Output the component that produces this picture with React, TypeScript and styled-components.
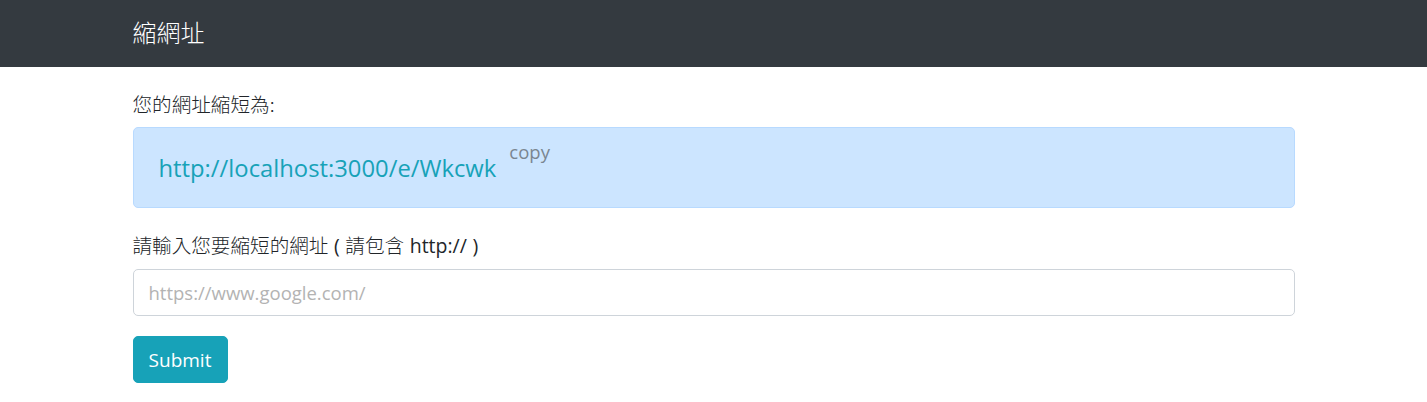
import React from "react";
import styled, { createGlobalStyle } from "styled-components";

const Global = createGlobalStyle`
  html, body { margin: 0; padding: 0; background: #fff; }
  body {
    font-family: "Open Sans", "Noto Sans CJK TC", sans-serif;
    color: #212529;
    font-size: 20px;
  }
  * { box-sizing: border-box; }
`;

const Navbar = styled.nav`
  height: 67px;
  background: #343a40;
  display: flex;
  align-items: center;
`;

const Container = styled.div`
  width: 1162px;
  margin: 0 auto;
`;

const Brand = styled.a`
  color: #fff;
  font-size: 24px;
  font-family: "Noto Sans CJK TC", sans-serif;
  font-weight: 300;
  text-decoration: none;
  line-height: 30px;
  display: inline-block;
  margin-top: -2px;
`;

const Main = styled(Container)`
  padding-top: 22px;
`;

const Label = styled.label<{ $mb: number }>`
  display: block;
  height: 30px;
  font-family: "Noto Sans CJK TC", sans-serif;
  font-size: 19.6px;
  line-height: 30px;
  font-weight: 300;
  margin-bottom: ${(p) => p.$mb}px;
`;

const Latin = styled.span`
  font-family: "Open Sans", sans-serif;
  font-weight: 400;
  font-size: 19.5px;
  word-spacing: 0.5px;
`;

const Alert = styled.div`
  height: 81px;
  background: #cce5ff;
  border: 1px solid #b8daff;
  border-radius: 5px;
  padding: 0 25px;
  display: flex;
  align-items: flex-start;
  padding-top: 20px;
  margin-bottom: 22px;
`;

const LinkText = styled.a`
  color: #17a2b8;
  font-size: 23.8px;
  line-height: 40px;
  text-decoration: none;
`;

const Copy = styled.span`
  color: #6c757d;
  font-size: 18.5px;
  line-height: 20px;
  margin-left: 13px;
  margin-top: -6px;
  opacity: 0.85;
`;

const Input = styled.input`
  display: block;
  width: 100%;
  height: 47px;
  border: 1px solid #ced4da;
  border-radius: 5px;
  padding: 0 15px;
  font-family: "Open Sans", sans-serif;
  font-size: 18.5px;
  color: #495057;
  margin-bottom: 20px;
  outline: none;
  &::placeholder {
    color: #b3b3b3;
  }
`;

const Button = styled.button`
  width: 95px;
  height: 47px;
  background: #17a2b8;
  border: 1px solid #17a2b8;
  border-radius: 5px;
  color: #fff;
  font-family: "Open Sans", sans-serif;
  font-size: 19px;
  padding: 0;
  cursor: pointer;
`;

export default function App() {
  return (
    <>
      <Global />
      <Navbar>
        <Container>
          <Brand href="#">縮網址</Brand>
        </Container>
      </Navbar>
      <Main>
        <Label $mb={8}>您的網址縮短為:</Label>
        <Alert>
          <LinkText href="#">http://localhost:3000/e/Wkcwk</LinkText>
          <Copy>copy</Copy>
        </Alert>
        <Label $mb={9}>
          請輸入您要縮短的網址<Latin> ( </Latin>請包含<Latin> http:// )</Latin>
        </Label>
        <Input placeholder="https://www.google.com/" />
        <Button>Submit</Button>
      </Main>
    </>
  );
}
